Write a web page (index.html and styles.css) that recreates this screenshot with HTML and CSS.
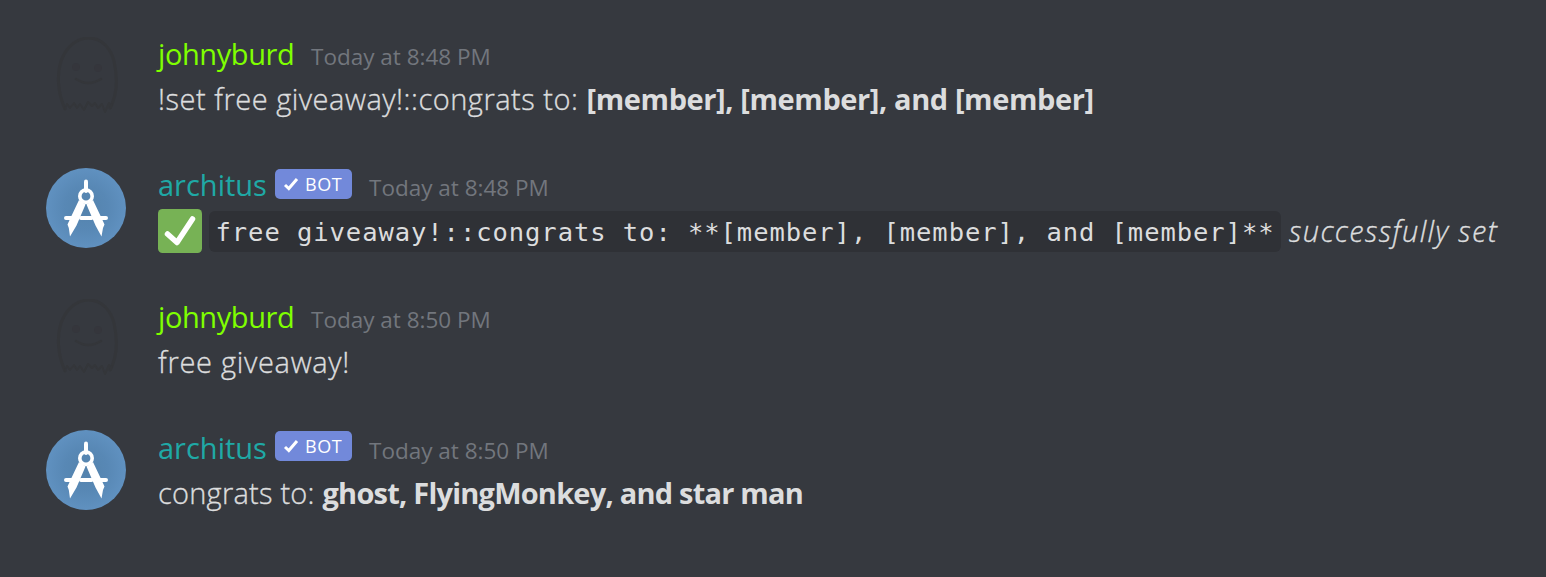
FILE: index.html
```html
<!DOCTYPE html>
<html lang="en">
<head>
<meta charset="utf-8">
<title>Chat</title>
<link rel="stylesheet" href="styles.css">
</head>
<body>
<svg class="defs" width="0" height="0" aria-hidden="true">
  <defs>
    <radialGradient id="blue"><stop offset="0" stop-color="#5483ad"/><stop offset=".55" stop-color="#5888b5"/><stop offset="1" stop-color="#6091c0"/></radialGradient>
    <symbol id="ghost" viewBox="0 0 80 80">
      <g fill="none" stroke="#34363a" stroke-width="3" stroke-linecap="round" stroke-linejoin="round">
        <path d="M19 72C11 54 11 36 15 24C21 8 32 1 43 1C56 1 65 12 68 24C72 42 71 58 64 71"/>
        <path d="M19 72l2-5 3 4 4-5 3 5 3-4 4 6 4-8 4 4 3-3 3 5 4-4 3 8 4-9 2 5 1-4" stroke-width="2"/>
        <path d="M30 42q12 8 25 0" stroke-width="2.6"/>
      </g>
      <circle cx="30" cy="30" r="4" fill="#35363c"/><circle cx="52" cy="31" r="4" fill="#35363c"/>
    </symbol>
    <symbol id="compass" viewBox="0 0 80 80">
      <circle cx="40" cy="40" r="40" fill="url(#blue)"/>
      <g fill="none" stroke="#fff" stroke-linecap="round">
        <path d="M40 13.500V23" stroke-width="4"/>
        <circle cx="40" cy="28.200" r="6.200" stroke-width="3.600"/>
        <path d="M20 50h8M52 50h8M35 50h10.500" stroke-width="4"/>
      </g>
      <path fill="#fff" d="M33 32l6.500 4.500L30.500 57.500 24 68.500 22.800 60 21.500 56.500 24 51zM47 32l-6.500 4.500L49.500 57.500 55.500 68.500 57 60 58.500 56.500 56 51z"/>
    </symbol>
    <symbol id="tick" viewBox="0 0 16 14"><path d="M2 8l3.800 3.500L14 2" fill="none" stroke="#fff" stroke-width="3"/></symbol>
  </defs>
</svg>
<main class="chat">
  <article class="message">
    <svg class="avatar"><use href="#ghost"/></svg>
    <div class="content">
      <header class="header"><span class="name user">johnyburd</span><time class="time">Today at 8:48 PM</time></header>
      <p class="body"><span class="command">!set free giveaway!::congrats to: </span><strong class="members">[member], [member], and [member]</strong></p>
    </div>
  </article>
  <article class="message">
    <svg class="avatar"><use href="#compass"/></svg>
    <div class="content">
      <header class="header"><span class="name bot">architus</span><span class="badge"><svg class="tick"><use href="#tick"/></svg>BOT</span><time class="time">Today at 8:48 PM</time></header>
      <p class="body result"><svg class="emoji" viewBox="0 0 44 44"><rect width="44" height="44" rx="4.500" fill="#77b255"/><path d="M9.500 25l9.500 8.500L34.500 10" fill="none" stroke="#fff" stroke-width="5.500" stroke-linecap="round" stroke-linejoin="round"/></svg><code class="code">free giveaway!::congrats to: **[member], [member], and [member]**</code><em class="status">successfully set</em></p>
    </div>
  </article>
  <article class="message">
    <svg class="avatar"><use href="#ghost"/></svg>
    <div class="content">
      <header class="header"><span class="name user">johnyburd</span><time class="time">Today at 8:50 PM</time></header>
      <p class="body"><span class="phrase">free giveaway!</span></p>
    </div>
  </article>
  <article class="message">
    <svg class="avatar"><use href="#compass"/></svg>
    <div class="content">
      <header class="header"><span class="name bot">architus</span><span class="badge"><svg class="tick"><use href="#tick"/></svg>BOT</span><time class="time">Today at 8:50 PM</time></header>
      <p class="body"><span class="reply">congrats to: </span><strong class="winners">ghost, FlyingMonkey, and star man</strong></p>
    </div>
  </article>
</main>
</body>
</html>
```
FILE: styles.css
```css
* { box-sizing: border-box; }
body { margin: 0; background: #36393f; color: #dcddde; font-family: "Open Sans", sans-serif; font-size: 29px; overflow: hidden; }
.defs { display: block; }
.chat { height: 577px; padding: 33px 0 0 46px; }
.message { display: grid; grid-template-columns: 80px 1fr; column-gap: 32px; height: 131.3px; }
.avatar { width: 80px; height: 80px; margin-top: 3.500px; overflow: visible; }
.header { display: flex; height: 44px; line-height: 42px; white-space: nowrap; }
.name { font-size: 29px; }
.user { color: #7fff00; width: 153px; letter-spacing: -.4px; }
.bot { color: #1fa9a6; width: 117px; }
.time { font-size: 22.500px; line-height: 48px; color: #72767d; }
.badge { display: flex; align-items: center; width: 77px; height: 30px; margin: 4.500px 17px 0 0; padding-left: 8px; gap: 6px; border-radius: 5px; background: #7289da; color: #fff; font-size: 18px; line-height: 28px; letter-spacing: .5px; }
.tick { width: 16px; height: 14px; }
.body { margin: 0; height: 44px; line-height: 44px; white-space: pre; font-weight: 300; -webkit-text-stroke: .35px currentColor; }
.body strong { font-weight: 700; -webkit-text-stroke: 0; }
.command { letter-spacing: .51px; }
.members { letter-spacing: -.4px; }
.phrase { letter-spacing: .7px; }
.reply { letter-spacing: .23px; }
.winners { letter-spacing: -.78px; }
.result { display: flex; align-items: center; padding-top: 1px; height: 45px; }
.emoji { width: 44px; height: 44px; margin-right: 7px; flex: none; }
.code { width: 1072px; height: 41px; padding-left: 6.500px; border-radius: 6px; background: #2f3136; font: 25.500px/42px "DejaVu Sans Mono", monospace; letter-spacing: .94px; -webkit-text-stroke: 0; }
.status { margin-left: 8px; line-height: 42px; letter-spacing: 1.35px; }
```
